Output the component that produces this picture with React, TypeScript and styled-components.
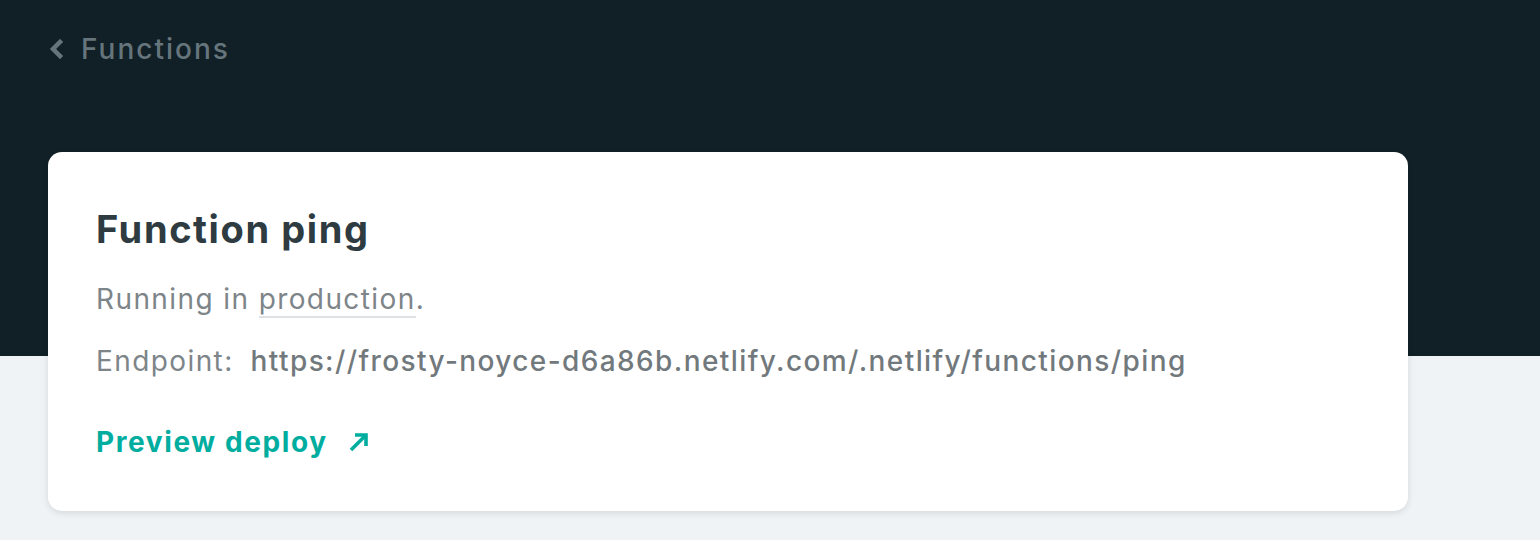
import React from "react";
import styled, { createGlobalStyle } from "styled-components";

const Global = createGlobalStyle`
  html, body { margin: 0; padding: 0; }
  body {
    font-family: Inter, "Noto Sans", "Liberation Sans", sans-serif;
    background: #f0f3f6;
    -webkit-font-smoothing: antialiased;
  }
`;

const Page = styled.div`
  min-height: 540px;
  background: linear-gradient(to bottom, #111f27 0, #111f27 356px, #f0f3f6 356px);
  padding: 0 132px 0 48px;
`;

const Breadcrumb = styled.a`
  display: inline-flex;
  align-items: center;
  gap: 17px;
  height: 98px;
  color: #66757c;
  font-size: 28px;
  font-weight: 500;
  text-decoration: none;
  letter-spacing: 2px;
`;

const Card = styled.section`
  margin-top: 54px;
  width: 1360px;
  box-sizing: border-box;
  background: #fff;
  border-radius: 14px;
  box-shadow: 0 2px 6px rgba(14, 30, 37, 0.12);
  padding: 55px 48px 50px 48px;
  height: 359px;
`;

const Title = styled.h1`
  margin: 0;
  font-size: 38px;
  line-height: 44px;
  font-weight: 700;
  color: #2e3b41;
  letter-spacing: 1.6px;
`;

const Line = styled.p<{ $top: number }>`
  margin: ${(p) => p.$top}px 0 0;
  font-size: 28px;
  line-height: 36px;
  color: #7d8589;
  letter-spacing: 1.4px;
`;

const Underlined = styled.span`
  border-bottom: 2px solid #dfe2e4;
`;

const Url = styled.span`
  color: #72797d;
  font-weight: 500;
  margin-left: 17px;
`;

const Action = styled.a`
  display: inline-flex;
  align-items: center;
  gap: 20px;
  margin-top: 45px;
  font-size: 28px;
  line-height: 36px;
  font-weight: 700;
  color: #00ad9f;
  text-decoration: none;
  letter-spacing: 1.6px;
`;

const Chevron = () => (
  <svg width="16" height="20" viewBox="0 0 16 20">
    <path d="M12 3 L5 10 L12 17" fill="none" stroke="#66757c" strokeWidth="4.5" strokeLinecap="square" />
  </svg>
);

const ArrowNE = () => (
  <svg width="22" height="22" viewBox="0 0 22 22">
    <path d="M3 19 L17 5" stroke="#00ad9f" strokeWidth="3.6" fill="none" />
    <path d="M7 4 H18 V15" stroke="#00ad9f" strokeWidth="3.6" fill="none" />
  </svg>
);

export default function App() {
  return (
    <>
      <Global />
      <Page>
        <Breadcrumb href="#">
          <Chevron />
          Functions
        </Breadcrumb>
        <Card>
          <Title>Function ping</Title>
          <Line $top={30}>
            Running in <Underlined>production</Underlined>.
          </Line>
          <Line $top={26}>
            Endpoint:<Url>https://frosty-noyce-d6a86b.netlify.com/.netlify/functions/ping</Url>
          </Line>
          <Action href="#">
            Preview deploy
            <ArrowNE />
          </Action>
        </Card>
      </Page>
    </>
  );
}
